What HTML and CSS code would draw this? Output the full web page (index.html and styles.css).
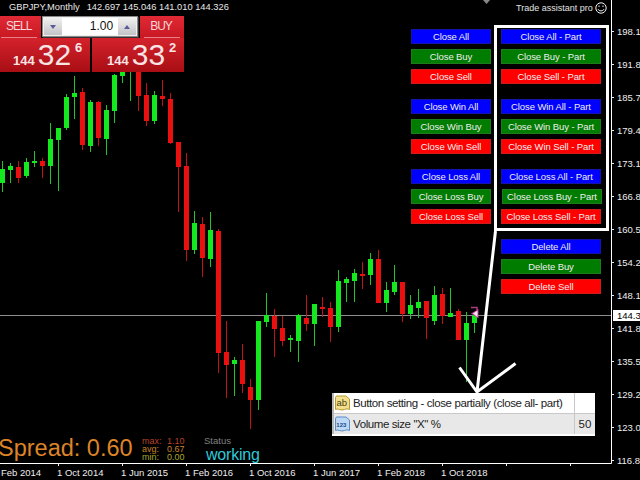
FILE: index.html
```html
<!DOCTYPE html>
<html lang="en">
<head>
<meta charset="utf-8">
<title>GBPJPY Monthly - Trade assistant pro</title>
<link rel="stylesheet" href="styles.css">
</head>
<body>
<main class="screen">
  <svg class="chart" width="640" height="480" viewBox="0 0 640 480" aria-hidden="true">
    <path class="crosshair" d="M0 315.5H611"/>
    <path class="wick up" d="M2.5 161V192M10.5 163V183M26.5 158V178M34.5 151V167M50.5 123V184M58.5 128V191M66.5 94V130M74.5 76V119M90.5 100V152M106.5 105V155M114.5 74V123M122.5 72V83M130.5 72V101M154.5 91V124M194.5 211V254M210.5 212V267M234.5 357V396M258.5 321V410M266.5 293V327M290.5 335V352M298.5 314V362M314.5 304V346M338.5 270V332M346.5 277V302M354.5 269V302M370.5 253V285M386.5 282V312M394.5 265V295M410.5 295V319M418.5 289V318M434.5 286V325M450.5 288V317M466.5 312V382M474.5 315V333"/>
    <path class="wick dn" d="M18.5 161V183M42.5 158V178M82.5 88V150M98.5 101V146M138.5 72V111M146.5 83V126M162.5 80V106M170.5 93V144M178.5 142V212M186.5 153V261M202.5 217V277M218.5 229V373M226.5 321V398M242.5 344V393M250.5 379V429M274.5 309V357M282.5 316V346M306.5 295V331M322.5 297V317M330.5 302V342M362.5 262V289M378.5 250V303M402.5 282V322M426.5 301V339M442.5 288V324M458.5 309V340"/>
    <path class="body up" d="M2.5 169V183M10.5 166V170M26.5 162V176M34.5 161V163M50.5 139V166M58.5 128V140M66.5 97V128M74.5 93V97M90.5 102V146M106.5 110V139M114.5 75V111M122.5 72V76M154.5 95V121M194.5 223V250M210.5 230V259M234.5 360V364M258.5 321V400M266.5 315V322M290.5 338V340M298.5 315V341M314.5 304V324M338.5 281V327M346.5 279V283M354.5 273V281M370.5 259V275M386.5 290V303M394.5 282V292M410.5 305V314M418.5 302V308M434.5 295V321M450.5 313V317M466.5 323V340M474.5 315V323"/>
    <path class="body dn" d="M18.5 167V178M42.5 161V166M82.5 92V145M98.5 102V138M138.5 72V96M146.5 95V121M162.5 96V99M170.5 99V143M178.5 142V167M186.5 166V250M202.5 224V258M218.5 231V353M226.5 352V365M242.5 360V384M250.5 387V400M274.5 316V329M282.5 328V341M306.5 318V324M322.5 307V309M330.5 308V327M362.5 274V276M378.5 259V303M402.5 282V314M426.5 301V318M442.5 294V316M458.5 311V340"/>
    <path class="mark-bar" d="M471 307.5H477V310"/>
    <polygon class="mark" points="478.500,309 478.500,318.500 471,313.500"/>
    <polygon class="mark-in" points="477.500,310.500 477.500,317 473,313.500"/>
    <polygon class="tri" points="483,0 490,0 486.500,4"/>
    <path class="axis" d="M611.500 0V463.500H0"/>
    <path class="tick" d="M611 31.500h3M611 64.500h3M611 97.500h3M611 130.500h3M611 163.500h3M611 196.500h3M611 229.500h3M611 262.500h3M611 295.500h3M611 328.500h3M611 361.500h3M611 394.500h3M611 427.500h3M611 460.500h3M58.500 463v3M122.500 463v3M186.500 463v3M250.500 463v3M314.500 463v3M378.500 463v3M442.500 463v3M506.500 463v3M570.500 463v3"/>
    <path class="callout" d="M495.500 231L477 392M459.500 367.500L477 392L515.500 363.500"/>
  </svg>

  <p class="title"><span>GBPJPY,Monthly</span><span>142.697 145.046 141.010 144.326</span></p>

  <section class="trade">
    <div class="trade-top">
      <button class="side sell">SELL</button>
      <div class="spinner">
        <span class="spin"><i class="arrow down"></i></span>
        <span class="lots">1.00</span>
        <span class="spin"><i class="arrow up"></i></span>
      </div>
      <button class="side buy">BUY</button>
    </div>
    <div class="quotes">
      <div class="quote q-sell"><span class="big-fig">144</span><span class="pips">32</span><sup class="point">6</sup></div>
      <div class="quote q-buy"><span class="big-fig">144</span><span class="pips">33</span><sup class="point">2</sup></div>
    </div>
  </section>

  <p class="brand">Trade assistant pro
    <svg class="smile" width="12" height="12" viewBox="0 0 12 12" aria-hidden="true"><circle cx="6" cy="6" r="5.200"/><path d="M3 7.200C4 9.400 8 9.400 9 7.200"/><path class="eye" d="M4 3.500v1.500M8 3.500v1.500"/></svg>
  </p>

  <section class="panel">
    <div class="col col-main">
      <div class="group">
        <button class="btn blue">Close All</button>
        <button class="btn green">Close Buy</button>
        <button class="btn red">Close Sell</button>
      </div>
      <div class="group">
        <button class="btn blue">Close Win All</button>
        <button class="btn green">Close Win Buy</button>
        <button class="btn red">Close Win Sell</button>
      </div>
      <div class="group">
        <button class="btn blue">Close Loss All</button>
        <button class="btn green">Close Loss Buy</button>
        <button class="btn red">Close Loss Sell</button>
      </div>
    </div>
    <div class="col col-part">
      <div class="part-box">
        <div class="group">
          <button class="btn blue">Close All - Part</button>
          <button class="btn green">Close Buy - Part</button>
          <button class="btn red">Close Sell - Part</button>
        </div>
        <div class="group">
          <button class="btn blue">Close Win All - Part</button>
          <button class="btn green">Close Win Buy - Part</button>
          <button class="btn red">Close Win Sell - Part</button>
        </div>
        <div class="group">
          <button class="btn blue">Close Loss All - Part</button>
          <button class="btn green nudge">Close Loss Buy - Part</button>
          <button class="btn red">Close Loss Sell - Part</button>
        </div>
      </div>
      <div class="group">
        <button class="btn blue">Delete All</button>
        <button class="btn green">Delete Buy</button>
        <button class="btn red">Delete Sell</button>
      </div>
    </div>
  </section>

  <ul class="prices">
    <li>198.1</li><li>191.8</li><li>185.7</li><li>179.4</li><li>173.1</li><li>166.8</li><li>160.5</li><li>154.2</li><li>148.1</li><li>141.8</li><li>135.5</li><li>129.2</li><li>123.0</li><li>116.8</li>
  </ul>
  <span class="last-price">144.3</span>

  <ul class="times">
    <li>1 Feb 2014</li><li>1 Oct 2014</li><li>1 Jun 2015</li><li>1 Feb 2016</li><li>1 Oct 2016</li><li>1 Jun 2017</li><li>1 Feb 2018</li><li>1 Oct 2018</li>
  </ul>

  <section class="stats">
    <span class="spread">Spread: 0.60</span>
    <dl class="minmax">
      <div class="mm-max"><dt>max:</dt><dd>1.10</dd></div>
      <div class="mm-avg"><dt>avg:</dt><dd>0.67</dd></div>
      <div class="mm-min"><dt>min:</dt><dd>0.00</dd></div>
    </dl>
    <div class="status"><span class="status-label">Status</span><span class="status-value">working</span></div>
  </section>

  <table class="inputs">
    <tr>
      <td class="ic"><svg width="17" height="16" viewBox="0 0 17 16" aria-hidden="true"><path class="tag-y" d="M1.500 2.500Q1.500 1 3 1H12L15.500 4V14.500Q13 13 10.500 14.500Q8 15.500 5.500 14.500Q3 13.500 1.500 14.500Z"/><text x="2.500" y="11" class="tag-txt">ab</text></svg></td>
      <td class="name">Button setting - close partially (close all- part)</td>
      <td class="val"></td>
    </tr>
    <tr class="alt">
      <td class="ic"><svg width="17" height="16" viewBox="0 0 17 16" aria-hidden="true"><path class="tag-b" d="M1.500 2.500Q1.500 1 3 1H12L15.500 4V14.500Q13 13 10.500 14.500Q8 15.500 5.500 14.500Q3 13.500 1.500 14.500Z"/><text x="2.300" y="10.500" class="tag-num">123</text></svg></td>
      <td class="name">Volume size "X" %</td>
      <td class="val">50</td>
    </tr>
  </table>
</main>
</body>
</html>
```

FILE: styles.css
```css
* { box-sizing: border-box; }
html, body { margin: 0; padding: 0; background: #000; }
.screen {
  position: relative;
  width: 640px;
  height: 480px;
  overflow: hidden;
  background: #000;
  color: #fff;
  font-family: "Liberation Sans", Arial, sans-serif;
  font-size: 9.500px;
}
.chart { position: absolute; left: 0; top: 0; }
.chart path { fill: none; }
.crosshair { stroke: #8c8c8c; stroke-width: 1; }
.wick { stroke-width: 1; }
.wick.up { stroke: #22c42a; }
.wick.dn { stroke: #c01414; }
.body { stroke-width: 5; }
.body.up { stroke: #14e81e; }
.body.dn { stroke: #ea1010; }
.mark-bar { stroke: #a83c80; stroke-width: 1.500; }
.mark { fill: #c43a96; }
.mark-in { fill: #f4e8f0; }
.tri { fill: #888; }
.axis { stroke: #fff; stroke-width: 1; }
.tick { stroke: #eee; stroke-width: 1; }
.callout { stroke: #fff; stroke-width: 3; }

.title {
  position: absolute;
  left: 9px;
  top: 1px;
  margin: 0;
  display: flex;
  gap: 7px;
  font-size: 9.300px;
  line-height: 13px;
  white-space: nowrap;
  color: #e8e8e8;
}

.trade { position: absolute; left: 0; top: 16px; width: 184px; }
.trade-top { display: flex; align-items: flex-start; height: 22px; }
.side {
  position: relative;
  width: 41px;
  height: 22px;
  padding: 0 0 2px;
  border: 0;
  background: linear-gradient(#e02a36, #c81822);
  color: #f6d6d8;
  font: 12px "Liberation Sans", Arial, sans-serif;
  letter-spacing: -1px;
  text-align: left;
}
.side::after {
  content: "";
  position: absolute;
  left: 1px;
  right: 4px;
  bottom: 0;
  height: 1px;
  background: #e8808a;
}
.sell { padding-left: 6px; }
.buy { width: 44px; margin-left: 2px; padding-left: 10px; }
.buy::after { left: 4px; right: 4px; }
.spinner {
  display: flex;
  width: 97px;
  height: 21px;
  margin-left: 1px;
  padding: 1px;
  background: #f0f0f0;
  border: 1px solid #888;
  box-shadow: 1px 1px 0 #333;
}
.spin {
  display: flex;
  align-items: center;
  justify-content: center;
  width: 18px;
  background: linear-gradient(#f0f0f0, #c4c4c8);
}
.lots {
  flex: 1;
  padding-right: 5px;
  background: #fff;
  color: #111;
  font-size: 12px;
  line-height: 17px;
  text-align: right;
}
.arrow { display: block; width: 0; height: 0; border: 3px solid transparent; }
.arrow.down { border-top: 4px solid #5a5a9a; border-bottom: 0; }
.arrow.up { border-bottom: 4px solid #5a5a9a; border-top: 0; }

.quotes { display: flex; gap: 2px; }
.quote {
  display: flex;
  align-items: flex-start;
  height: 34px;
  background: linear-gradient(#d4222c, #a80e14);
  color: #f8e4e4;
}
.q-sell { width: 90px; padding-left: 13px; }
.q-buy { width: 92px; padding-left: 15px; }
.big-fig { margin-top: 16px; font-size: 13px; font-weight: bold; line-height: 14px; }
.pips { margin-left: 3px; font-size: 30px; line-height: 34px; }
.point { margin: 3px 0 0 4px; font-size: 13px; font-weight: bold; line-height: 13px; }

.brand {
  position: absolute;
  left: 516px;
  top: 1px;
  margin: 0;
  display: flex;
  align-items: center;
  gap: 2px;
  height: 13px;
  font-size: 9px;
  white-space: nowrap;
  color: #e4e4e4;
}
.smile circle, .smile path { fill: none; stroke: #f4f4f4; stroke-width: 1; }

.panel { position: absolute; left: 411px; top: 25px; display: flex; gap: 3px; }
.col { display: flex; flex-direction: column; }
.col-main { gap: 15px; width: 80px; padding-top: 4px; }
.col-part { gap: 8px; width: 115px; }
.part-box {
  display: flex;
  flex-direction: column;
  gap: 15px;
  width: 115px;
  height: 206px;
  padding: 1px 5px 4px 4px;
  border: 3px solid #fff;
}
.col-part > .group { margin-left: 7px; width: 100px; }
.group { display: flex; flex-direction: column; gap: 5px; }
.btn {
  display: block;
  width: 100%;
  height: 15px;
  padding: 0;
  border: 1px solid;
  color: #eee;
  font: 9.500px/13px "Liberation Sans", Arial, sans-serif;
  letter-spacing: -.1px;
  text-align: center;
  white-space: nowrap;
}
.blue { background: #0000ff; border-color: #1414a8; }
.green { background: #007c00; border-color: #1c7c1c; }
.red { background: #ff0000; border-color: #cc1c1c; }
.nudge { margin-left: 1px; }

.prices {
  position: absolute;
  left: 617px;
  top: 25px;
  margin: 0;
  padding: 0;
  list-style: none;
  color: #eee;
}
.prices li { height: 33px; line-height: 14px; white-space: nowrap; }
.last-price {
  position: absolute;
  left: 613px;
  top: 310px;
  width: 27px;
  height: 11px;
  padding-left: 4px;
  background: #fff;
  color: #000;
  line-height: 11px;
  white-space: nowrap;
}

.times {
  position: absolute;
  left: -7px;
  top: 466px;
  display: flex;
  margin: 0;
  padding: 0;
  list-style: none;
  color: #eee;
  line-height: 13px;
}
.times li { width: 64px; white-space: nowrap; }

.stats { position: absolute; left: -2px; top: 435px; display: flex; align-items: flex-start; }
.spread { width: 144px; color: #dd8428; font-size: 23.500px; line-height: 26px; white-space: nowrap; }
.minmax { width: 62px; margin: 0; padding-top: 2px; font-size: 9px; line-height: 8px; }
.minmax div { display: flex; height: 8px; }
.minmax dt { width: 25px; }
.minmax dd { margin: 0; }
.mm-max { color: #b8402a; }
.mm-avg { color: #c88428; }
.mm-min { color: #a8a828; }
.status { display: flex; flex-direction: column; padding-top: 1px; }
.status-label { color: #808080; font-size: 9.500px; line-height: 10px; }
.status-value { margin: 0 0 0 2px; color: #30c8d8; font-size: 16px; line-height: 17px; letter-spacing: -.2px; }

.inputs {
  position: absolute;
  left: 332px;
  top: 393px;
  width: 263px;
  height: 43px;
  border-collapse: collapse;
  background: #fff;
  border-left: 2px solid #b8b8b8;
  border-bottom: 2px solid #fff;
  color: #222;
  font-size: 11.500px;
  letter-spacing: -.4px;
  table-layout: fixed;
}
.inputs td { height: 20px; padding: 0; border-bottom: 1px solid #c8c8c8; white-space: nowrap; }
.inputs .alt td { background: #e8e8e8; height: 21px; }
.inputs .ic { width: 20px; line-height: 0; }
.inputs .val { width: 21px; padding-left: 4px; border-left: 1px solid #c8c8c8; letter-spacing: 0; }
.tag-y { fill: #f2e08c; stroke: #b89a30; }
.tag-b { fill: #bcd8f4; stroke: #5a8cc8; }
.tag-txt { fill: #4a4010; font: 9.500px "Liberation Sans", Arial, sans-serif; letter-spacing: 0; }
.tag-num { fill: #1a4a8c; font: bold 6px "Liberation Sans", Arial, sans-serif; letter-spacing: 0; }
```
